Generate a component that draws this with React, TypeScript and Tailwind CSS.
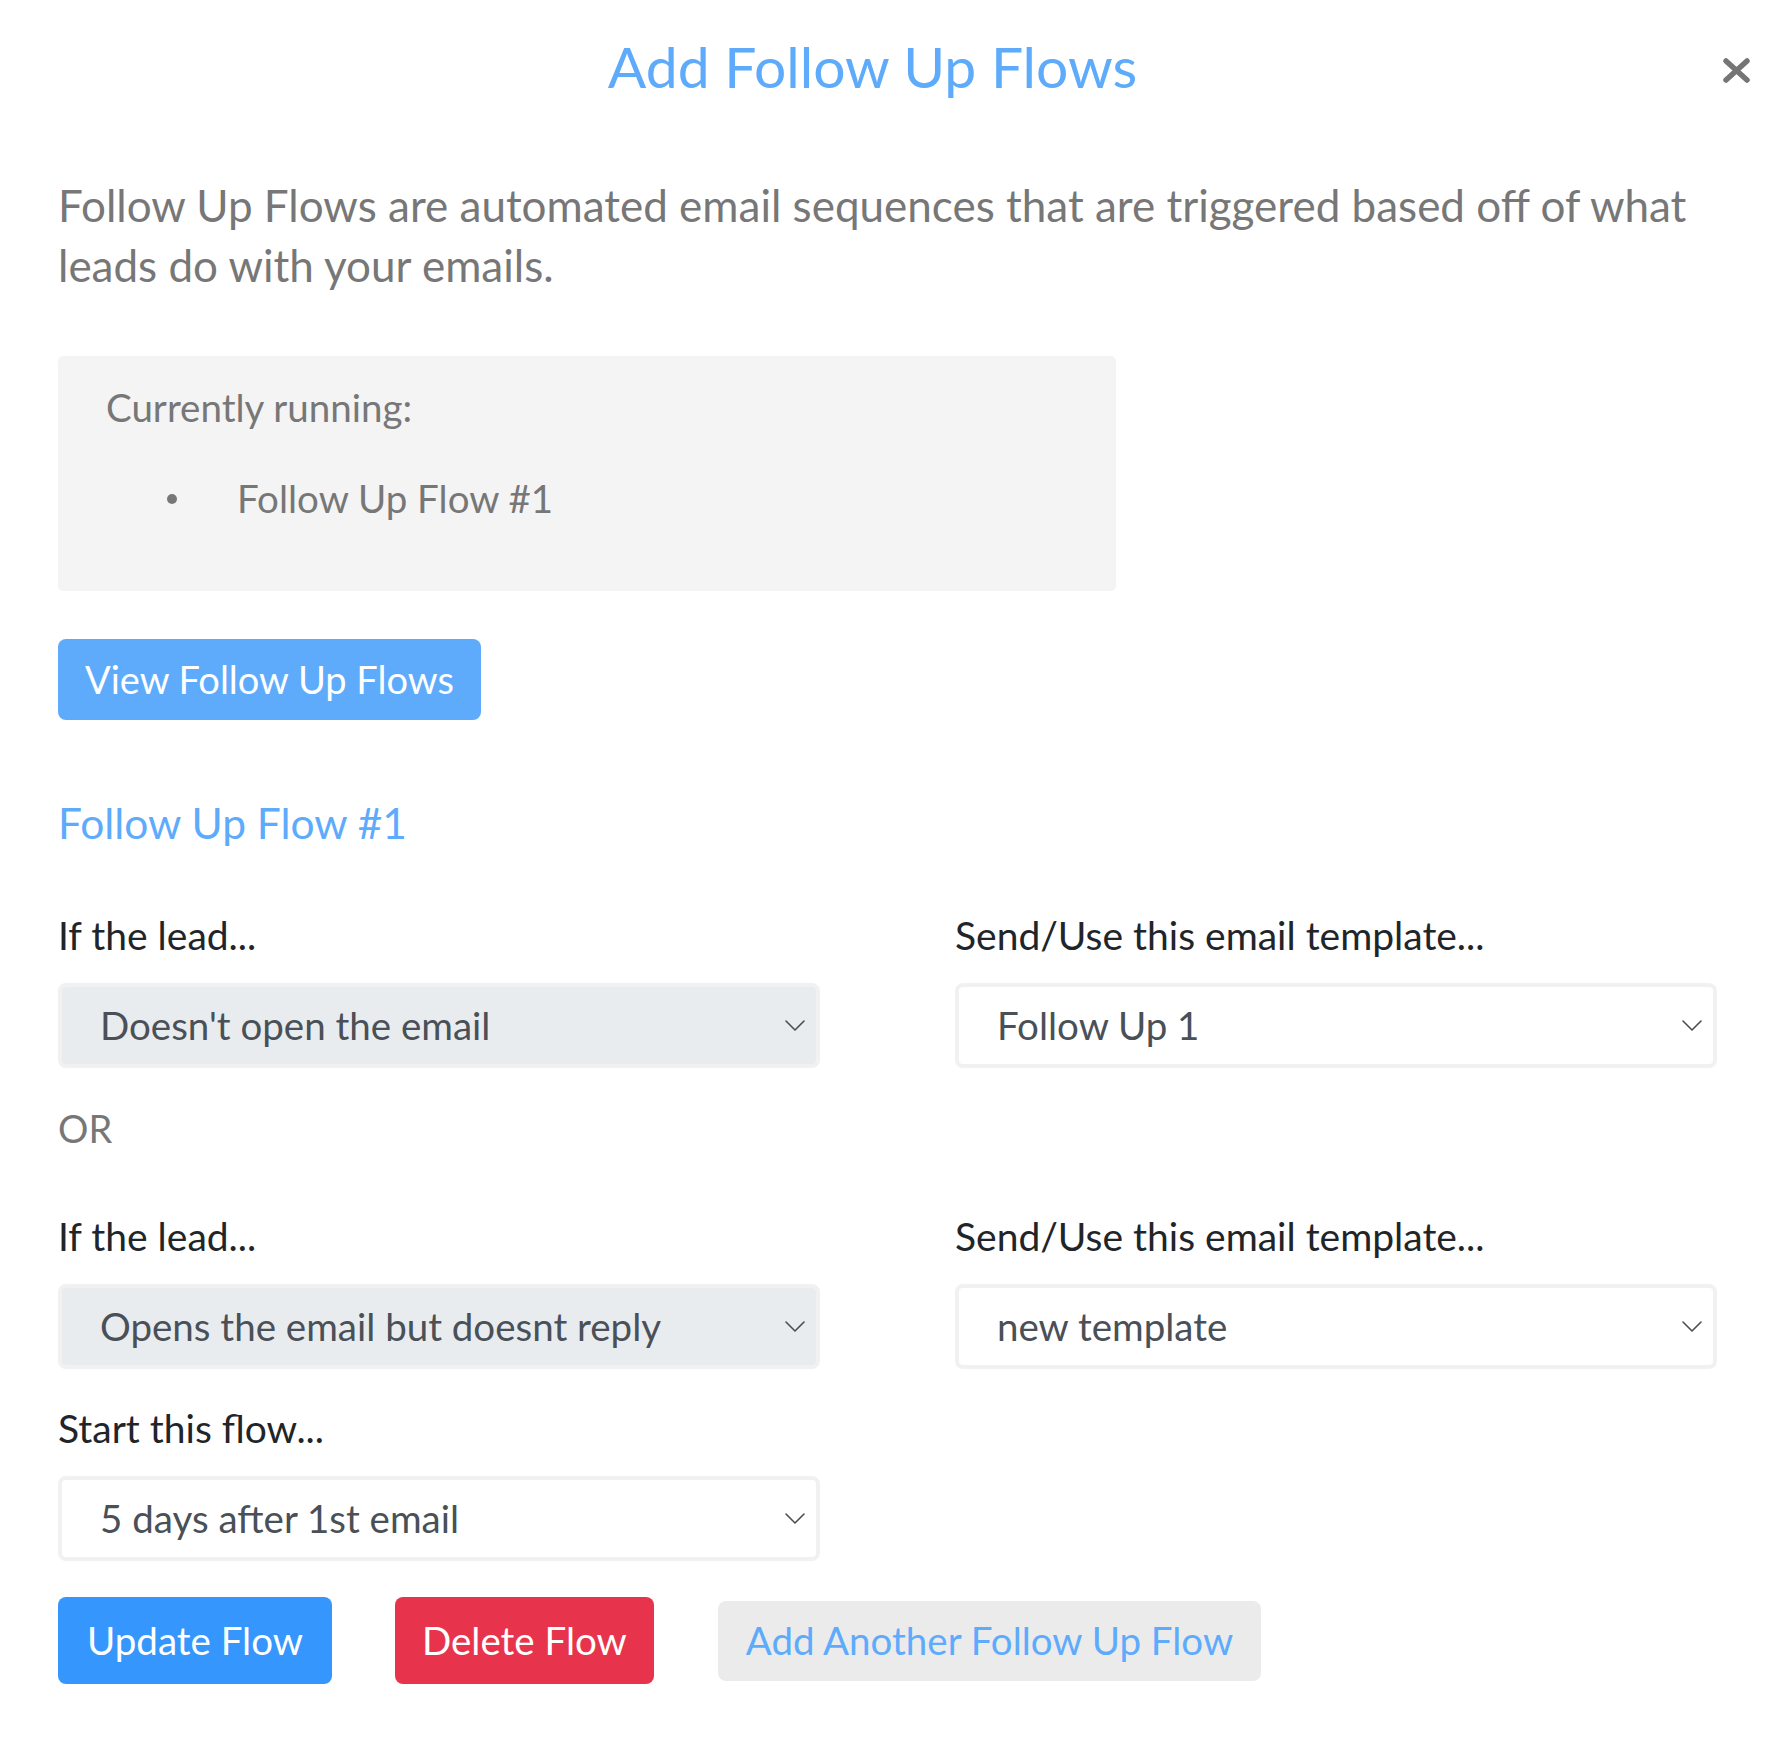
import React from 'react';

const font = "font-['Lato','Noto_Sans',sans-serif]";

function Chevron() {
  return (
    <svg width="20" height="11" viewBox="0 0 20 11" fill="none" className="shrink-0">
      <path d="M1 1l9 9 9-9" stroke="#4a4f55" strokeWidth="1.6" strokeLinecap="round" strokeLinejoin="round" />
    </svg>
  );
}

function FakeSelect({ value, disabled }: { value: string; disabled?: boolean }) {
  return (
    <div
      className={
        'flex h-[85px] items-center justify-between rounded-[8px] border-4 border-[#f1f1f1] pl-[38px] pr-[11px] ' +
        (disabled ? 'bg-[#e9ecef]' : 'bg-white')
      }
    >
      <span className="text-[38.5px] leading-none text-[#495057]">{value}</span>
      <Chevron />
    </div>
  );
}

function Field({ label, value, disabled }: { label: string; value: string; disabled?: boolean }) {
  return (
    <div className="flex flex-col">
      <div className="text-[39px] leading-[48px] text-[#212529]">{label}</div>
      <div className="mt-[24px]">
        <FakeSelect value={value} disabled={disabled} />
      </div>
    </div>
  );
}

export default function App() {
  return (
    <div className={`${font} min-h-[1762px] w-full bg-white`}>
      {/* header */}
      <div className="flex items-start pl-[58px] pt-[34px]">
        <h1 className="flex-1 text-center text-[57px] font-normal leading-[65px] text-[#5eabfc]">
          Add Follow Up Flows
        </h1>
        <button className="flex w-[90px] justify-center pl-[8px] pt-[24px]">
          <svg width="27" height="25" viewBox="0 0 27 25">
            <path d="M3 3l21 19M24 3L3 22" stroke="#757575" strokeWidth="5.5" strokeLinecap="round" />
          </svg>
        </button>
      </div>

      <div className="pl-[58px] pr-[60px]">
        <p className="mt-[76px] text-[44px] leading-[60px] text-[#777777]">
          Follow Up Flows are automated email sequences that are triggered based off of what leads do with your
          emails.
        </p>

        <div className="mt-[61px] w-[1058px] rounded-[5px] bg-[#f4f4f4] pb-[67px] pl-[48px] pt-[26px] text-[38.5px] leading-[51px] text-[#777777]">
          <div>Currently running:</div>
          <ul className="mt-[40px]">
            <li className="flex items-center">
              <span className="ml-[61px] mr-[60px] h-[10px] w-[10px] rounded-full bg-[#777777]" />
              <span>Follow Up Flow #1</span>
            </li>
          </ul>
        </div>

        <button className="mt-[48px] flex h-[81px] items-center rounded-[8px] bg-[#5eabfc] px-[27px] text-[38px] text-white">
          View Follow Up Flows
        </button>

        <h2 className="mt-[78px] text-[42.5px] leading-[49px] text-[#5eabfc]">Follow Up Flow #1</h2>

        <div className="mt-[64px] grid grid-cols-2 gap-x-[135px]">
          <Field label="If the lead..." value="Doesn't open the email" disabled />
          <Field label="Send/Use this email template..." value="Follow Up 1" />
        </div>

        <div className="mt-[35px] text-[38px] leading-[51px] text-[#777777]">OR</div>

        <div className="mt-[58px] grid grid-cols-2 gap-x-[135px]">
          <Field label="If the lead..." value="Opens the email but doesnt reply" disabled />
          <Field label="Send/Use this email template..." value="new template" />
        </div>

        <div className="mt-[35px] grid grid-cols-2 gap-x-[135px]">
          <Field label="Start this flow..." value="5 days after 1st email" />
        </div>

        <div className="mt-[36px] flex items-center">
          <button className="flex h-[87px] items-center rounded-[8px] bg-[#3597fe] px-[29px] text-[38.5px] text-white">
            Update Flow
          </button>
          <button className="ml-[63px] flex h-[87px] items-center rounded-[8px] bg-[#e7344c] px-[27px] text-[38.5px] text-white">
            Delete Flow
          </button>
          <button className="ml-[64px] flex h-[80px] items-center rounded-[8px] bg-[#ebebeb] px-[28px] text-[38.5px] text-[#5eabfc]">
            Add Another Follow Up Flow
          </button>
        </div>
      </div>
    </div>
  );
}
